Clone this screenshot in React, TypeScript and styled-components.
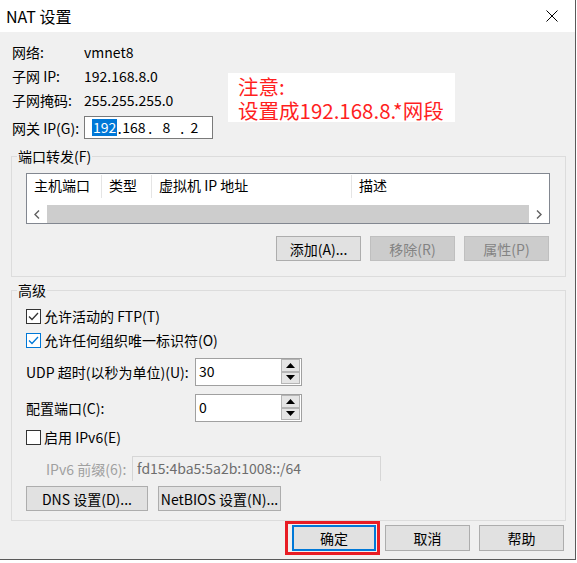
import * as React from "react";
import styled, { createGlobalStyle } from "styled-components";

const FONT = `"Noto Sans CJK SC", "Noto Sans", sans-serif`;

const GlobalStyle = createGlobalStyle`
  * { box-sizing: border-box; }
  html, body { margin: 0; background: #ffffff; }
  body { font-family: ${FONT}; font-size: 14px; color: #000; }
`;

export default function App() {
  return (
    <>
      <GlobalStyle />
      <Window>
        <TitleBar>
          <Title>NAT 设置</Title>
          <CloseButton>
            <svg width="12" height="12" viewBox="0 0 12 12">
              <path d="M0.5 0.5 L11.5 11.5 M11.5 0.5 L0.5 11.5" stroke="#000" strokeWidth="1" />
            </svg>
          </CloseButton>
        </TitleBar>

        <Body>
          <TopSection>
            <InfoColumn>
              <InfoRow>
                <InfoLabel>网络:</InfoLabel>
                <span>vmnet8</span>
              </InfoRow>
              <InfoRow>
                <InfoLabel>子网 IP:</InfoLabel>
                <span>192.168.8.0</span>
              </InfoRow>
              <InfoRow>
                <InfoLabel>子网掩码:</InfoLabel>
                <span>255.255.255.0</span>
              </InfoRow>
              <GatewayRow>
                <InfoLabel>网关 IP(G):</InfoLabel>
                <IpBox>
                  <IpField $selected>192</IpField>
                  <IpDot $w={5}>.</IpDot>
                  <IpField $w={22}>168</IpField>
                  <IpDot $w={12}>.</IpDot>
                  <IpField $w={20} $center>8</IpField>
                  <IpDot $w={12}>.</IpDot>
                  <IpField $w={12} $center>2</IpField>
                </IpBox>
              </GatewayRow>
            </InfoColumn>

            <Note>
              <NoteLine>注意:</NoteLine>
              <NoteLine>设置成192.168.8.*网段</NoteLine>
            </Note>
          </TopSection>

          <Group $mt={9} $pt={9} $pb={15}>
            <Legend>端口转发(F)</Legend>
            <Table>
              <HeaderRow>
                <HeaderCell $w={75}>主机端口</HeaderCell>
                <HeaderCell $w={50}>类型</HeaderCell>
                <HeaderCell $w={200}>虚拟机 IP 地址</HeaderCell>
                <HeaderCell $last>描述</HeaderCell>
              </HeaderRow>
              <ScrollBar>
                <ScrollArrow>
                  <svg width="6" height="9" viewBox="0 0 6 9">
                    <path d="M5 0.5 L1 4.5 L5 8.5" fill="none" stroke="#606060" strokeWidth="1.4" />
                  </svg>
                </ScrollArrow>
                <ScrollTrack />
                <ScrollArrow>
                  <svg width="6" height="9" viewBox="0 0 6 9">
                    <path d="M1 0.5 L5 4.5 L1 8.5" fill="none" stroke="#606060" strokeWidth="1.4" />
                  </svg>
                </ScrollArrow>
              </ScrollBar>
            </Table>
            <ButtonRow>
              <Button>添加(A)...</Button>
              <Button disabled>移除(R)</Button>
              <Button disabled>属性(P)</Button>
            </ButtonRow>
          </Group>

          <Group $mt={5} $pt={0} $pb={9}>
            <Legend>高级</Legend>
            <CheckRow $mt={6}>
              <CheckBox $checked />
              允许活动的 FTP(T)
            </CheckRow>
            <CheckRow>
              <CheckBox $checked $focus />
              允许任何组织唯一标识符(O)
            </CheckRow>

            <FieldRow $mt={6}>
              <FieldLabel>UDP 超时(以秒为单位)(U):</FieldLabel>
              <SpinBox value="30" />
            </FieldRow>
            <FieldRow $mt={8}>
              <FieldLabel>配置端口(C):</FieldLabel>
              <SpinBox value="0" />
            </FieldRow>

            <CheckRow $mt={3}>
              <CheckBox />
              启用 IPv6(E)
            </CheckRow>

            <PrefixRow>
              <PrefixLabel>IPv6 前缀(6):</PrefixLabel>
              <PrefixInput>fd15:4ba5:5a2b:1008::/64</PrefixInput>
            </PrefixRow>

            <LeftButtons>
              <Button $w={122}>DNS 设置(D)...</Button>
              <Button $w={123}>NetBIOS 设置(N)...</Button>
            </LeftButtons>
          </Group>

          <DialogButtons>
            <RedFrame>
              <Button $w={84} $h={26} $focus>确定</Button>
            </RedFrame>
            <Button $w={85} $h={26}>取消</Button>
            <Button $w={85} $h={26}>帮助</Button>
          </DialogButtons>
        </Body>
      </Window>
    </>
  );
}

const SpinBox = ({ value }: { value: string }) => (
  <SpinFrame>
    <SpinText>{value}</SpinText>
    <SpinButtons>
      <SpinButton>
        <svg width="9" height="5" viewBox="0 0 9 5">
          <path d="M0 5 L4.5 0 L9 5 Z" fill="#000" />
        </svg>
      </SpinButton>
      <SpinButton>
        <svg width="9" height="5" viewBox="0 0 9 5">
          <path d="M0 0 L9 0 L4.5 5 Z" fill="#000" />
        </svg>
      </SpinButton>
    </SpinButtons>
  </SpinFrame>
);

const CheckBox = ({ $checked, $focus }: { $checked?: boolean; $focus?: boolean }) => (
  <Box $focus={$focus}>
    {$checked && (
      <svg width="11" height="9" viewBox="0 0 11 9">
        <path
          d="M1 4.5 L4 7.5 L10 1"
          fill="none"
          stroke={$focus ? "#0078d7" : "#333"}
          strokeWidth="1.3"
        />
      </svg>
    )}
  </Box>
);

const Window = styled.div`
  width: 576px;
  height: 560px;
  background: #f0f0f0;
  border-right: 1px solid #5a5a5a;
  border-bottom: 1px solid #5a5a5a;
  display: flex;
  flex-direction: column;
`;

const TitleBar = styled.div`
  height: 32px;
  background: #ffffff;
  display: flex;
  align-items: center;
  justify-content: space-between;
  padding-left: 6px;
`;

const Title = styled.div`
  font-size: 16px;
  line-height: 20px;
`;

const CloseButton = styled.div`
  width: 46px;
  height: 32px;
  display: flex;
  align-items: center;
  justify-content: center;
`;

const Body = styled.div`
  display: flex;
  flex-direction: column;
  padding: 8px 9px 0 11px;
`;

const TopSection = styled.div`
  display: flex;
  align-items: flex-start;
`;

const InfoColumn = styled.div`
  width: 203px;
  display: flex;
  flex-direction: column;
`;

const InfoRow = styled.div`
  height: 24px;
  display: flex;
  align-items: center;
  padding-left: 1px;
`;

const GatewayRow = styled(InfoRow)`
  margin-top: 4px;
  height: 23px;
`;

const InfoLabel = styled.span`
  width: 72px;
  flex: none;
  white-space: nowrap;
`;

const IpBox = styled.div`
  width: 129px;
  height: 23px;
  flex: none;
  background: #fff;
  border: 1px solid #7a7a7a;
  display: flex;
  align-items: center;
  padding-left: 7px;
`;

const IpField = styled.span<{ $w?: number; $selected?: boolean; $center?: boolean }>`
  ${(p) => (p.$w ? `width: ${p.$w}px;` : "")}
  flex: none;
  height: 17px;
  line-height: 17px;
  text-align: ${(p) => (p.$center ? "center" : "left")};
  background: ${(p) => (p.$selected ? "#0078d7" : "transparent")};
  color: ${(p) => (p.$selected ? "#fff" : "#000")};
  padding: ${(p) => (p.$selected ? "0 1px" : "0")};
`;

const IpDot = styled.span<{ $w: number }>`
  width: ${(p) => p.$w}px;
  flex: none;
  text-align: center;
`;

const Note = styled.div`
  margin-top: 33px;
  margin-left: 14px;
  width: 227px;
  height: 49px;
  background: #fff;
  color: #ff1f1f;
  font-size: 20.5px;
  padding: 1px 0 0 10px;
  white-space: nowrap;
  display: flex;
  flex-direction: column;
`;

const NoteLine = styled.div`
  height: 24px;
  line-height: 24px;
`;

const Group = styled.fieldset<{ $mt: number; $pt: number; $pb: number }>`
  margin: ${(p) => p.$mt}px 0 0 0;
  min-inline-size: 0;
  border: 1px solid #dcdcdc;
  padding: ${(p) => p.$pt}px 15px ${(p) => p.$pb}px 14px;
  display: flex;
  flex-direction: column;
`;

const Legend = styled.legend`
  padding: 0 1px;
  margin-left: -9px;
  line-height: 16px;
  height: 16px;
`;

const Table = styled.div`
  height: 51px;
  background: #fff;
  border: 1px solid #828790;
  display: flex;
  flex-direction: column;
`;

const HeaderRow = styled.div`
  height: 31px;
  display: flex;
  align-items: flex-start;
  padding-top: 1px;
`;

const HeaderCell = styled.div<{ $w?: number; $last?: boolean }>`
  ${(p) => (p.$w ? `width: ${p.$w}px;` : "flex: 1;")}
  height: 23px;
  line-height: 21px;
  padding-left: 7px;
  border-right: ${(p) => (p.$last ? "none" : "1px solid #e5e5e5")};
  white-space: nowrap;
`;

const ScrollBar = styled.div`
  height: 18px;
  display: flex;
`;

const ScrollArrow = styled.div`
  width: 20px;
  display: flex;
  align-items: center;
  justify-content: center;
  background: #fff;
`;

const ScrollTrack = styled.div`
  flex: 1;
  background: #cdcdcd;
`;

const ButtonRow = styled.div`
  margin-top: 12px;
  display: flex;
  justify-content: flex-end;
  gap: 9px;
  padding-right: 1px;
`;

const Button = styled.button<{ $w?: number; $h?: number; $focus?: boolean }>`
  width: ${(p) => p.$w ?? 85}px;
  height: ${(p) => p.$h ?? 25}px;
  font-family: ${FONT};
  font-size: 14px;
  color: #000;
  background: #e1e1e1;
  border: ${(p) => (p.$focus ? "2px solid #0078d7" : "1px solid #adadad")};
  padding: 0;
  margin: 0;
  border-radius: 0;
  white-space: nowrap;

  &:disabled {
    background: #cccccc;
    border-color: #bfbfbf;
    color: #838383;
  }
`;

const CheckRow = styled.div<{ $mt?: number }>`
  margin-top: ${(p) => p.$mt ?? 0}px;
  height: 24px;
  display: flex;
  align-items: center;
  gap: 3px;
  white-space: nowrap;
`;

const Box = styled.span<{ $focus?: boolean }>`
  width: 15px;
  height: 15px;
  flex: none;
  background: #fff;
  border: 1px solid ${(p) => (p.$focus ? "#0078d7" : "#333")};
  display: flex;
  align-items: center;
  justify-content: center;
`;

const FieldRow = styled.div<{ $mt: number }>`
  margin-top: ${(p) => p.$mt}px;
  height: 28px;
  display: flex;
  align-items: center;
`;

const FieldLabel = styled.span`
  width: 169px;
  flex: none;
  white-space: nowrap;
`;

const SpinFrame = styled.div`
  width: 107px;
  height: 28px;
  background: #fff;
  border: 1px solid #a0a0a0;
  display: flex;
  padding: 0 1px 1px 0;
`;

const SpinText = styled.div`
  flex: 1;
  padding: 2px 0 0 3px;
  line-height: 20px;
`;

const SpinButtons = styled.div`
  width: 19px;
  display: flex;
  flex-direction: column;
`;

const SpinButton = styled.div`
  flex: 1;
  background: #e5e5e5;
  border: 1px solid #b5b5b5;
  display: flex;
  align-items: center;
  justify-content: center;
`;

const PrefixRow = styled.div`
  margin-top: 7px;
  height: 25px;
  display: flex;
  align-items: center;
  padding-left: 20px;
`;

const PrefixLabel = styled.span`
  width: 86px;
  flex: none;
  color: #a0a0a0;
  white-space: nowrap;
`;

const PrefixInput = styled.div`
  width: 249px;
  height: 25px;
  border: 1px solid #d6d6d6;
  border-bottom: none;
  color: #6d6d6d;
  padding-left: 4px;
  line-height: 22px;
`;

const LeftButtons = styled.div`
  margin-top: 5px;
  display: flex;
  gap: 10px;
`;

const DialogButtons = styled.div`
  margin-top: 0;
  display: flex;
  justify-content: flex-end;
  align-items: center;
  gap: 5px;
  padding-right: 2px;

  & > :last-child {
    margin-left: 4px;
  }
`;

const RedFrame = styled.div`
  border: 3px solid #e81c24;
  padding: 1px 1px 1px 4px;
  display: flex;
`;
